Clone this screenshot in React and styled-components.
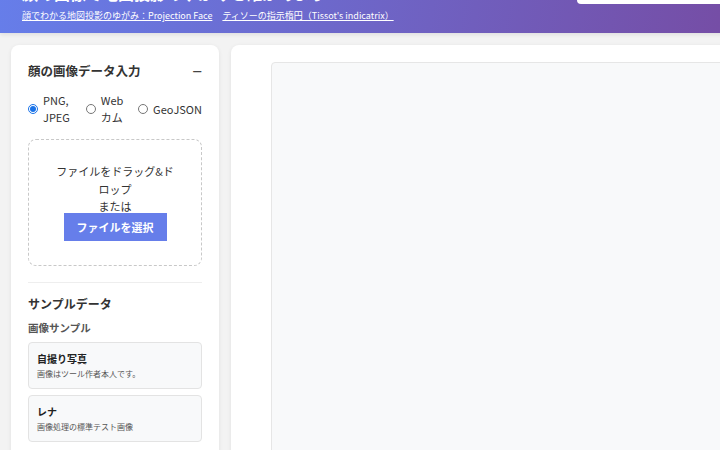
import styled, { createGlobalStyle } from 'styled-components';

const GlobalStyle = createGlobalStyle`
  html, body {
    margin: 0;
    padding: 0;
    overflow: hidden;
    background: #f3f3f3;
  }
  body {
    font-family: "Noto Sans CJK JP", "Noto Sans", sans-serif;
    color: #333;
  }
  * {
    box-sizing: border-box;
  }
`;

const samples = [
  { title: '自撮り写真', desc: '画像はツール作者本人です。' },
  { title: 'レナ', desc: '画像処理の標準テスト画像' },
];

export default function App() {
  return (
    <>
      <GlobalStyle />
      <StPage>
        <StHeader>
          <StTitleRow>
            <StTitle>顔の画像で地図投影のゆがみを確かめよう</StTitle>
            <StSearch />
          </StTitleRow>
          <StLinks>
            <StLink href="#">顔でわかる地図投影のゆがみ：Projection Face</StLink>
            <StLink href="#">ティソーの指示楕円（Tissot's indicatrix）</StLink>
          </StLinks>
        </StHeader>

        <StMain>
          <StSidePanel>
            <StPanelHead>
              <StPanelTitle>顔の画像データ入力</StPanelTitle>
              <StCollapse>−</StCollapse>
            </StPanelHead>

            <StRadioRow>
              <StRadioLabel>
                <StRadio type="radio" name="src" defaultChecked />
                <span>PNG, JPEG</span>
              </StRadioLabel>
              <StRadioLabel>
                <StRadio type="radio" name="src" />
                <span>Web カム</span>
              </StRadioLabel>
              <StRadioLabel>
                <StRadio type="radio" name="src" />
                <span>GeoJSON</span>
              </StRadioLabel>
            </StRadioRow>

            <StDropZone>
              <StDropText>ファイルをドラッグ&ドロップ</StDropText>
              <StDropText>または</StDropText>
              <StSelectBtn type="button">ファイルを選択</StSelectBtn>
            </StDropZone>

            <StDivider />

            <StSectionTitle>サンプルデータ</StSectionTitle>
            <StSubTitle>画像サンプル</StSubTitle>
            <StSampleList>
              {samples.map((s) => (
                <StSampleCard key={s.title}>
                  <StSampleName>{s.title}</StSampleName>
                  <StSampleDesc>{s.desc}</StSampleDesc>
                </StSampleCard>
              ))}
            </StSampleList>
          </StSidePanel>

          <StViewPanel>
            <StCanvas />
          </StViewPanel>
        </StMain>
      </StPage>
    </>
  );
}

const StPage = styled.div`
  display: flow-root;
  width: 760px;
  height: 450px;
  overflow: hidden;
`;

const StHeader = styled.header`
  margin-top: -30px;
  padding: 12px 22px 9px;

  background: linear-gradient(100deg, #667eea 0%, #764ba2 100%);
  box-shadow: 0 2px 4px rgba(0, 0, 0, 0.08);
  color: #fff;
`;

const StTitleRow = styled.div`
  display: flex;
  justify-content: space-between;
  align-items: flex-end;
  height: 22px;
`;

const StTitle = styled.h1`
  margin: 0;

  font-size: 16px;
  line-height: 22px;
  font-weight: 700;
`;

const StSearch = styled.div`
  width: 161px;
  height: 30px;
  flex-shrink: 0;

  background: #fff;
  border-radius: 4px;
`;

const StLinks = styled.div`
  margin-top: 4px;

  display: flex;
  gap: 10px;
`;

const StLink = styled.a`
  color: #fff;
  font-size: 9px;
  line-height: 16px;
  text-decoration: underline;
`;

const StMain = styled.main`
  padding: 12px 11px;

  display: flex;
  gap: 12px;
  align-items: flex-start;
`;

const StSidePanel = styled.section`
  width: 208px;
  flex-shrink: 0;
  padding: 17px 17px 20px;

  background: #fff;
  border-radius: 8px;
  box-shadow: 0 1px 4px rgba(0, 0, 0, 0.08);
`;

const StPanelHead = styled.div`
  display: flex;
  justify-content: space-between;
  align-items: center;
`;

const StPanelTitle = styled.h2`
  margin: 0;

  font-size: 12.5px;
  line-height: 18px;
  font-weight: 700;
  color: #333;
`;

const StCollapse = styled.span`
  font-size: 17px;
  line-height: 18px;
  font-weight: 400;
  color: #444;
`;

const StRadioRow = styled.div`
  margin-top: 12px;

  display: flex;
  gap: 10px;
  align-items: center;
`;

const StRadioLabel = styled.label`
  display: flex;
  align-items: center;
  gap: 5px;

  font-size: 11px;
  line-height: 17px;
  color: #333;
`;

const StRadio = styled.input`
  width: 10px;
  height: 10px;
  margin: 0;
  flex-shrink: 0;

  accent-color: #1a73e8;
`;

const StDropZone = styled.div`
  margin-top: 13px;
  padding: 23px 25px 24px;

  display: flex;
  flex-direction: column;
  align-items: center;

  border: 1.5px dashed #c8c8c8;
  border-radius: 8px;
`;

const StDropText = styled.div`
  font-size: 11px;
  line-height: 17.5px;
  color: #333;
  text-align: center;
`;

const StSelectBtn = styled.button`
  width: 103px;
  height: 28px;
  margin-top: -3px;

  border: none;
  background: #667eea;
  color: #fff;

  font-family: inherit;
  font-size: 11px;
  font-weight: 700;
`;

const StDivider = styled.hr`
  margin: 16px 0 0;

  border: none;
  border-top: 1px solid #eee;
`;

const StSectionTitle = styled.h3`
  margin: 12px 0 0;

  font-size: 12px;
  line-height: 18px;
  font-weight: 700;
  color: #333;
`;

const StSubTitle = styled.h4`
  margin: 7px 0 0;

  font-size: 10.5px;
  line-height: 16px;
  font-weight: 700;
  color: #555;
`;

const StSampleList = styled.div`
  margin-top: 6px;

  display: flex;
  flex-direction: column;
  gap: 6px;
`;

const StSampleCard = styled.div`
  height: 47px;
  padding: 8px 8px;

  background: #f8f9fa;
  border: 1px solid #e3e3e3;
  border-radius: 4px;
`;

const StSampleName = styled.div`
  font-size: 10px;
  line-height: 15px;
  font-weight: 700;
  color: #222;
`;

const StSampleDesc = styled.div`
  margin-top: 2px;

  font-size: 8px;
  line-height: 12px;
  color: #555;
`;

const StViewPanel = styled.section`
  flex: 1;
  min-height: 420px;
  padding: 17px 0 0 40px;

  background: #fff;
  border-radius: 8px;
  box-shadow: 0 1px 4px rgba(0, 0, 0, 0.08);
`;

const StCanvas = styled.div`
  height: 400px;

  background: #f8f9fa;
  border: 1px solid #e6e6e6;
  border-radius: 4px;
`;
